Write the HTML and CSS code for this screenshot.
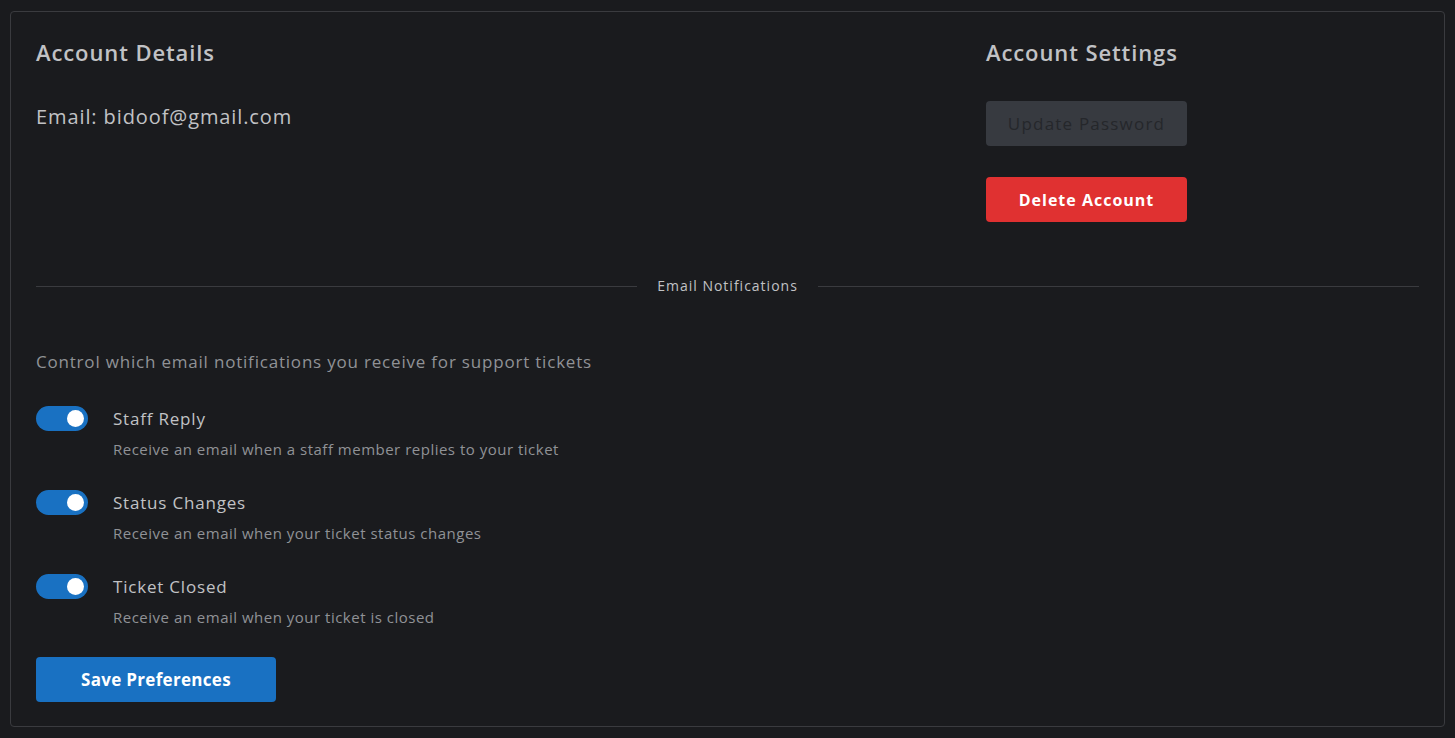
FILE: index.html
```html
<!DOCTYPE html>
<html lang="en">
<head>
    <meta charset="UTF-8">
    <meta name="viewport" content="width=device-width, initial-scale=1.0">
    <title>Account</title>
    <link rel="stylesheet" href="styles.css">
</head>
<body>

    <div class="card">
        <div class="top">
            <div class="details">
                <h2>Account Details</h2>
                <p class="email">Email: bidoof@gmail.com</p>
            </div>
            <div class="settings">
                <h2>Account Settings</h2>
                <button class="btn btn-disabled" disabled>Update Password</button>
                <button class="btn btn-red">Delete Account</button>
            </div>
        </div>

        <div class="divider">
            <span class="line"></span>
            <span class="divider-label">Email Notifications</span>
            <span class="line"></span>
        </div>

        <p class="intro">Control which email notifications you receive for support tickets</p>

        <div class="option">
            <span class="switch"><span class="thumb"></span></span>
            <div>
                <div class="option-title">Staff Reply</div>
                <div class="option-desc">Receive an email when a staff member replies to your ticket</div>
            </div>
        </div>

        <div class="option">
            <span class="switch"><span class="thumb"></span></span>
            <div>
                <div class="option-title">Status Changes</div>
                <div class="option-desc">Receive an email when your ticket status changes</div>
            </div>
        </div>

        <div class="option">
            <span class="switch"><span class="thumb"></span></span>
            <div>
                <div class="option-title">Ticket Closed</div>
                <div class="option-desc">Receive an email when your ticket is closed</div>
            </div>
        </div>

        <button class="btn btn-blue">Save Preferences</button>
    </div>

</body>
</html>
```

FILE: styles.css
```css
body {
    margin: 0;
    padding: 11px 10px;
    background: #1a1b1e;
    color: #c1c2c5;
    font-family: "Open Sans", sans-serif;
}

.card {
    border: 1px solid #3a3b3f;
    border-radius: 4px;
    padding: 18px 25px 25px;
    height: 671px;
}

.top {
    display: flex;
}

.details {
    width: 950px;
}

.settings {
    flex: 1;
    display: flex;
    flex-direction: column;
    align-items: flex-start;
}

h2 {
    margin: 0;
    font-size: 22px;
    font-weight: 600;
    line-height: 44px;
    letter-spacing: 0.9px;
}

.email {
    margin: 28px 0 0;
    font-size: 20px;
    line-height: 30px;
    letter-spacing: 0.9px;
}

.btn {
    border: none;
    border-radius: 4px;
    height: 45px;
    font-family: inherit;
    font-size: 16px;
    font-weight: 700;
    color: #fff;
    padding: 0;
}

.settings .btn {
    width: 201px;
}

.btn-disabled {
    margin-top: 27px;
    background: #373a40;
    color: #25272b;
    font-size: 17px;
    font-weight: 500;
    letter-spacing: 1.2px;
}

.btn-red {
    margin-top: 31px;
    background: #e03131;
    letter-spacing: 1px;
}

.btn-blue {
    margin-top: 19px;
    width: 240px;
    background: #1971c2;
    font-size: 17px;
    letter-spacing: 0.3px;
}

.divider {
    display: flex;
    align-items: center;
    gap: 20px;
    margin-top: 52px;
}

.line {
    flex: 1;
    height: 1px;
    background: #3a3b3f;
}

.divider-label {
    font-size: 14px;
    line-height: 24px;
    letter-spacing: 1px;
    color: #c1c2c5;
}

.intro {
    margin: 51px 0 31px;
    font-size: 17px;
    line-height: 26px;
    letter-spacing: 0.8px;
    color: #909296;
}

.option {
    display: flex;
    gap: 25px;
    margin-top: 20px;
    height: 64px;
}

.intro + .option {
    margin-top: 30px;
}

.switch {
    width: 52px;
    height: 25px;
    border-radius: 13px;
    background: #1971c2;
    display: flex;
    align-items: center;
    justify-content: flex-end;
    padding-right: 4px;
    box-sizing: border-box;
}

.thumb {
    width: 17px;
    height: 17px;
    border-radius: 50%;
    background: #fff;
}

.option-title {
    font-size: 17px;
    line-height: 26px;
    letter-spacing: 0.8px;
    color: #c1c2c5;
}

.option-desc {
    margin-top: 6px;
    font-size: 15px;
    line-height: 22px;
    letter-spacing: 0.5px;
    color: #909296;
}
```
